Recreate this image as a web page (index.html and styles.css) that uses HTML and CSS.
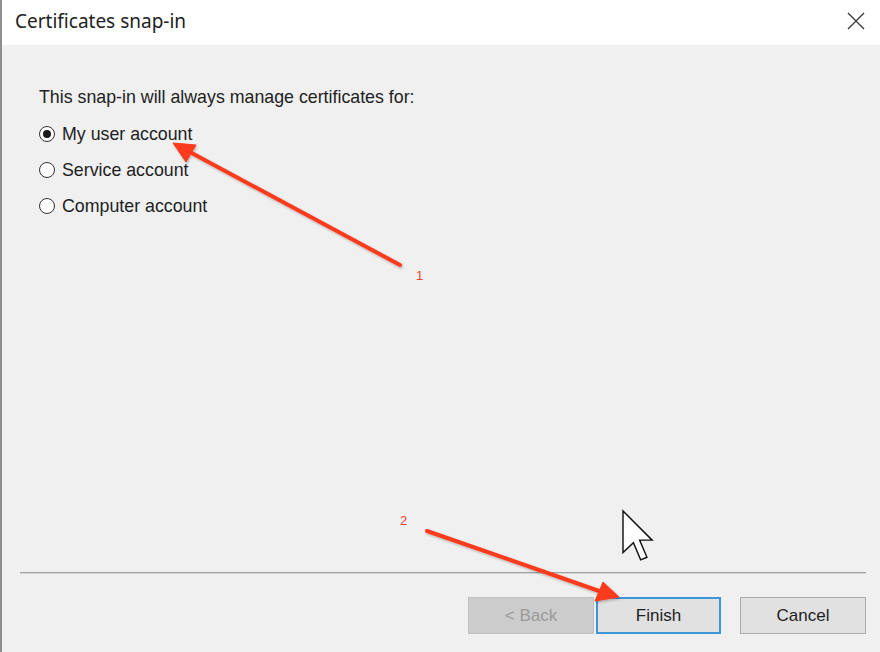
FILE: index.html
```html
<!DOCTYPE html>
<html lang="en">
<head>
<meta charset="utf-8">
<title>Certificates snap-in</title>
<link rel="stylesheet" href="styles.css">
</head>
<body>
<div class="window">
  <div class="edge"></div>
  <div class="dialog">
    <div class="titlebar">
      <span class="title">Certificates snap-in</span>
      <svg class="close" width="18" height="18" viewBox="0 0 18 18" aria-hidden="true">
        <path d="M1 1 L17 17 M17 1 L1 17" stroke="#3a3a3a" stroke-width="1.3" fill="none"/>
      </svg>
    </div>
    <div class="content">
      <p class="prompt">This snap-in will always manage certificates for:</p>
      <div class="options">
        <label class="option"><span class="radio checked"></span>My user account</label>
        <label class="option"><span class="radio"></span>Service account</label>
        <label class="option"><span class="radio"></span>Computer account</label>
      </div>
    </div>
    <div class="separator"></div>
    <div class="footer">
      <button class="btn disabled">&lt; Back</button>
      <button class="btn primary">Finish</button>
      <button class="btn cancel">Cancel</button>
    </div>
  </div>
</div>

<svg class="annotations" width="880" height="652" viewBox="0 0 880 652" aria-hidden="true">
  <defs>
    <filter id="sh" x="-10%" y="-10%" width="120%" height="120%">
      <feDropShadow dx="1" dy="1.5" stdDeviation="1" flood-color="#000" flood-opacity="0.25"/>
    </filter>
  </defs>
  <g filter="url(#sh)" fill="#fb3a1d" stroke="#fb3a1d">
    <line x1="400" y1="265" x2="188" y2="151" stroke-width="4" stroke-linecap="round"/>
    <polygon points="173,143 196,145 186,162" stroke-width="1" stroke-linejoin="round"/>
    <line x1="427" y1="531" x2="602" y2="592" stroke-width="4" stroke-linecap="round"/>
    <polygon points="619,597 595,601 603,582" stroke-width="1" stroke-linejoin="round"/>
  </g>
  <text x="416" y="280" class="num">1</text>
  <text x="400" y="525" class="num">2</text>
  <path transform="translate(623 511) scale(2.6)" d="M0 0 L0 16 L4 12.2 L6.8 18.8 L9.2 17.8 L6.4 11.2 L11.2 11.2 Z" fill="#fff" stroke="#111" stroke-width="0.55" stroke-linejoin="miter"/>
</svg>
</body>
</html>
```

FILE: styles.css
```css
* { box-sizing: border-box; }
html, body { margin: 0; padding: 0; }
body {
  width: 880px;
  height: 652px;
  overflow: hidden;
  position: relative;
  font-family: "Liberation Sans", Arial, sans-serif;
  color: #1a1a1a;
}
.window {
  display: flex;
  height: 652px;
}
.edge {
  width: 2px;
  background: #8e8e8e;
}
.dialog {
  flex: 1;
  display: flex;
  flex-direction: column;
  background: #f0f0f0;
}
.titlebar {
  height: 45px;
  background: #ffffff;
  display: flex;
  align-items: center;
  justify-content: space-between;
  padding: 0 15px 4px 13px;
}
.title {
  font-family: "Noto Sans", sans-serif;
  font-size: 19px;
  color: #222;
}
.close { display: block; }
.content {
  flex: 1;
  padding: 41px 0 0 37px;
}
.prompt {
  margin: 0;
  font-size: 17.8px;
  line-height: 22px;
  color: #222;
}
.options {
  margin-top: 15px;
  display: flex;
  flex-direction: column;
  gap: 14px;
}
.option {
  display: flex;
  align-items: center;
  gap: 7px;
  font-size: 17.8px;
  line-height: 22px;
  color: #1e1e1e;
}
.radio {
  width: 16px;
  height: 16px;
  border-radius: 50%;
  border: 1px solid #333;
  background: #fff;
  display: flex;
  align-items: center;
  justify-content: center;
}
.radio.checked::after {
  content: "";
  width: 8px;
  height: 8px;
  border-radius: 50%;
  background: #1a1a1a;
}
.separator {
  margin: 0 14px 0 18px;
  height: 2px;
  border-top: 1px solid #a0a0a0;
  border-bottom: 1px solid #d6d6d6;
}
.footer {
  display: flex;
  justify-content: flex-end;
  padding: 23px 14px 18px 0;
}
.btn {
  width: 126px;
  height: 37px;
  font-family: inherit;
  font-size: 17px;
  color: #1e1e1e;
  background: #e1e1e1;
  border: 1px solid #adadad;
  padding: 0;
}
.btn.disabled {
  background: #cccccc;
  border-color: #bfbfbf;
  color: #9a9a9a;
}
.btn.primary {
  margin-left: 2px;
  width: 125px;
  border: 2px solid #3d95d8;
}
.btn.cancel {
  margin-left: 19px;
}
.annotations {
  position: absolute;
  left: 0;
  top: 0;
  pointer-events: none;
}
.num {
  font-family: "Liberation Sans", sans-serif;
  font-size: 13px;
  fill: #f2412a;
}
```
